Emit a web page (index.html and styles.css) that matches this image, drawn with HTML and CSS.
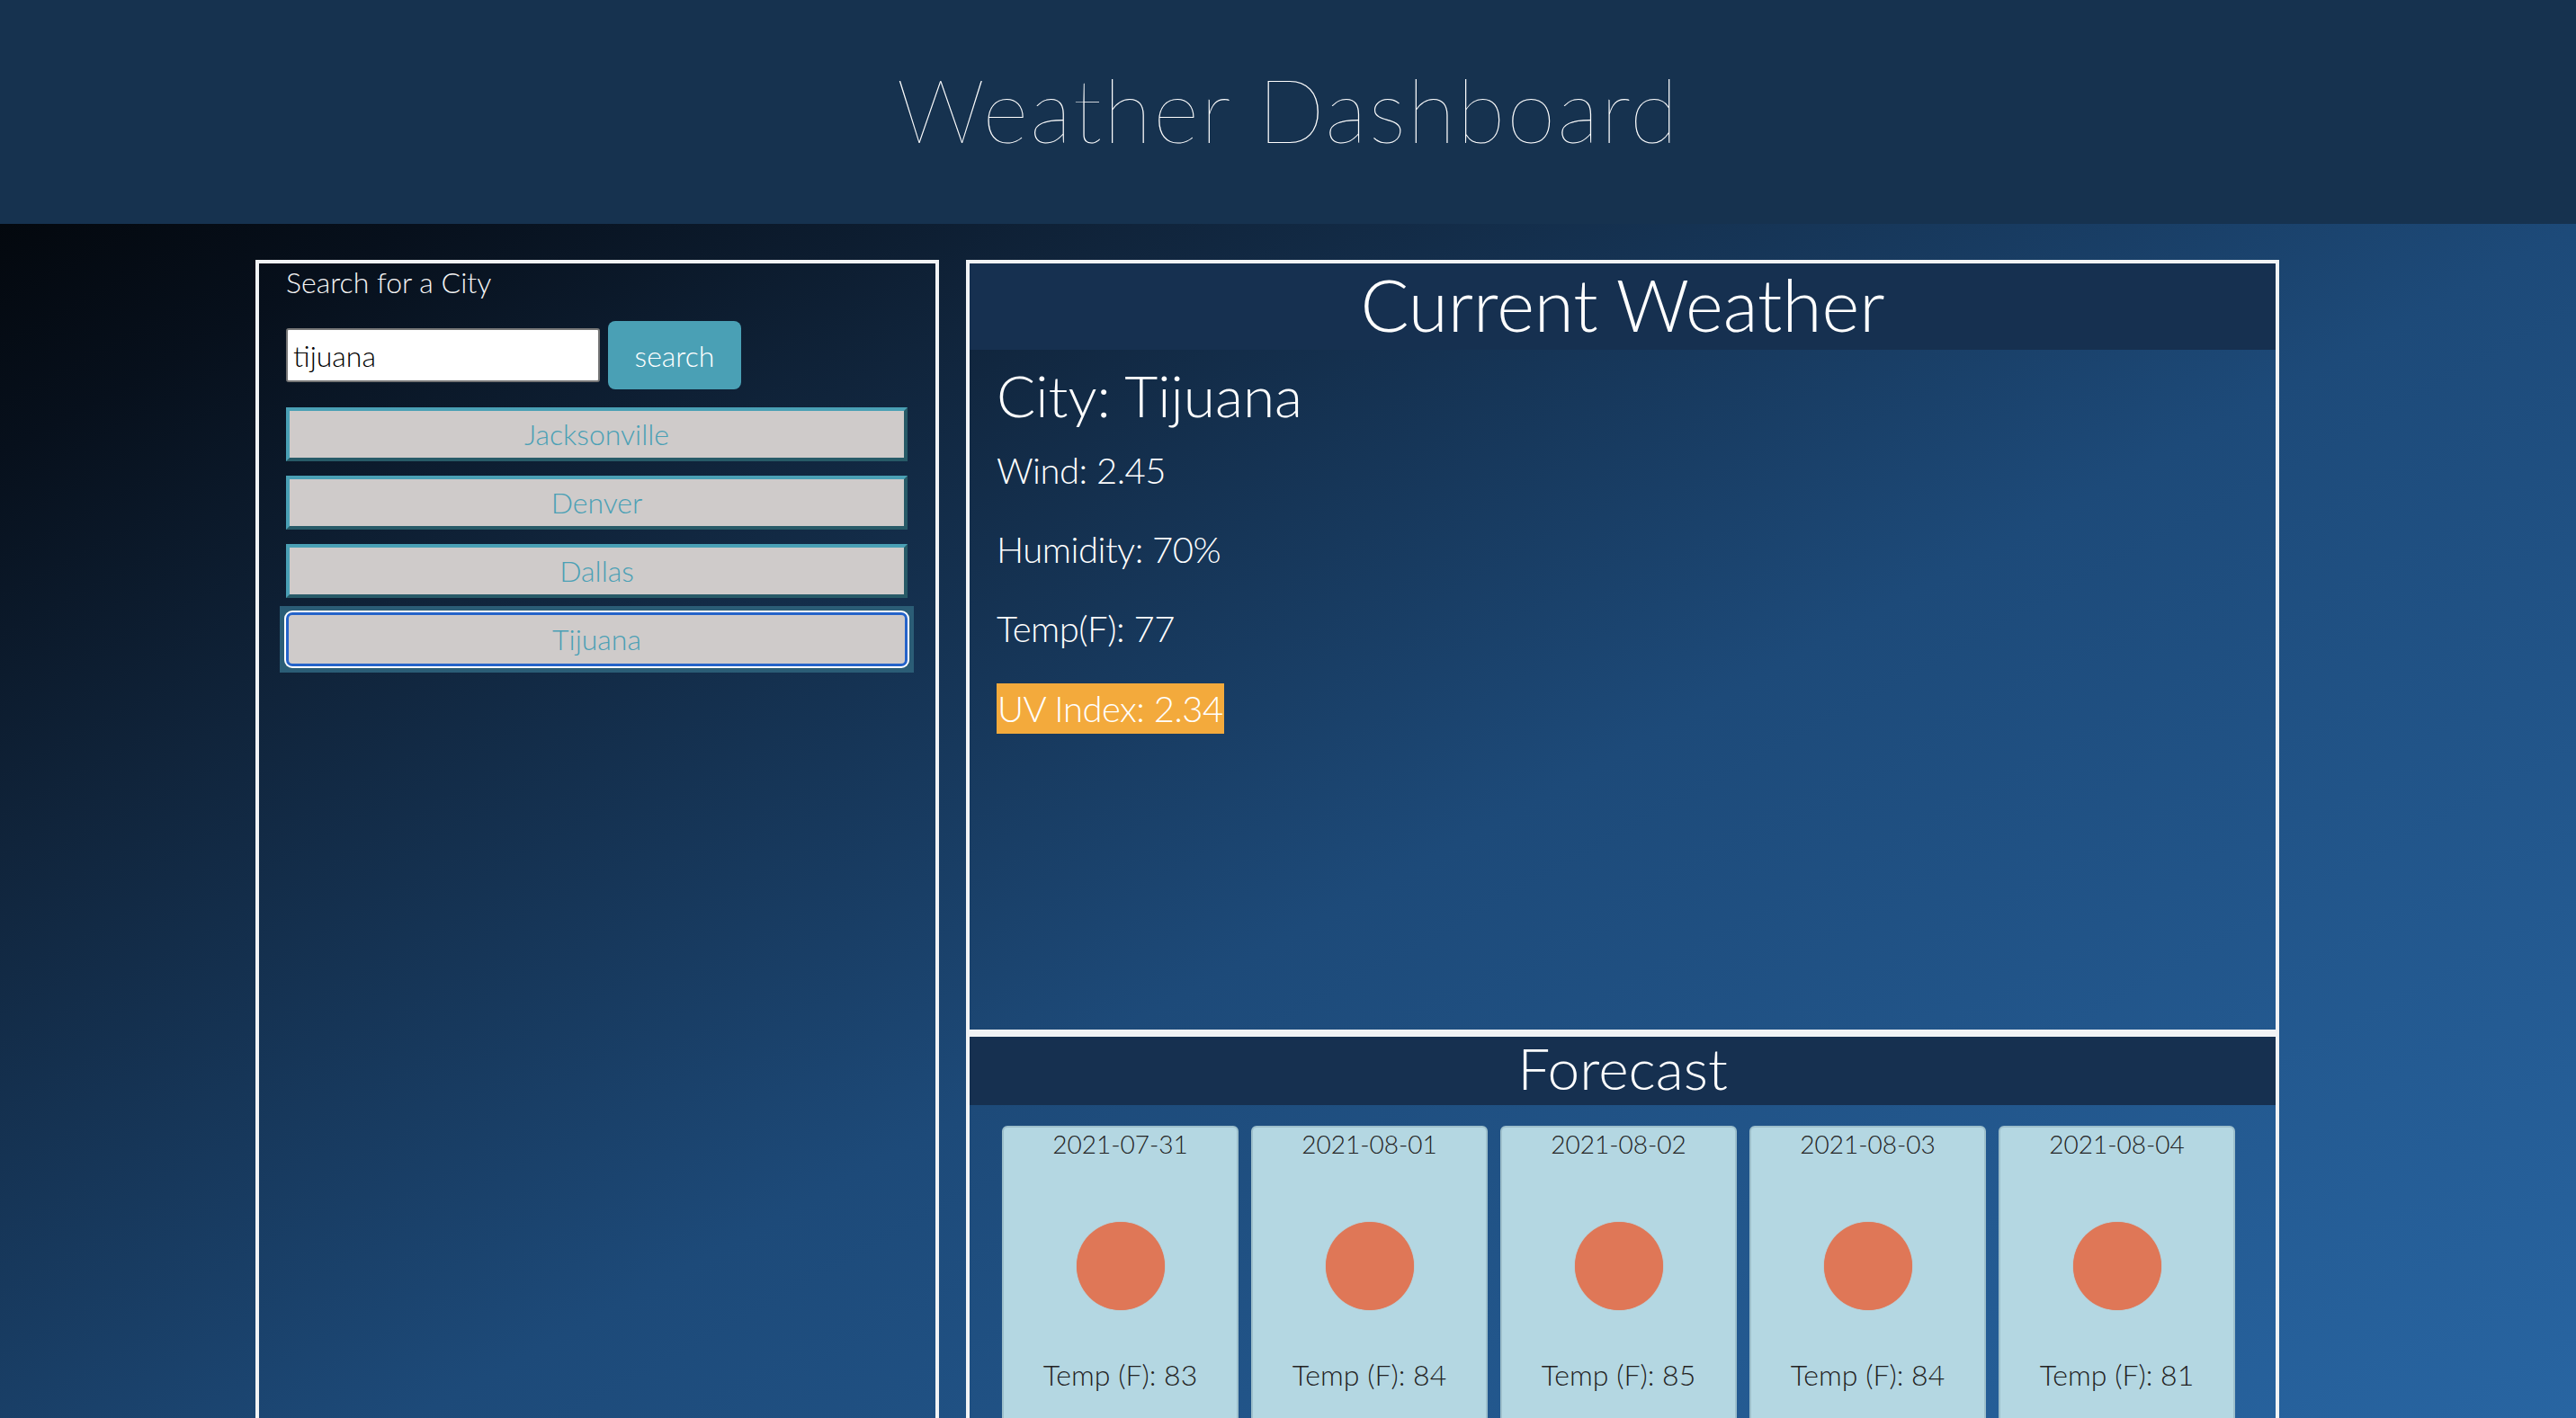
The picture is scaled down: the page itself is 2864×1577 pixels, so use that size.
FILE: index.html
```html
<!DOCTYPE html>
<html lang="en">
<head>
<meta charset="utf-8">
<title>Weather Dashboard</title>
<link rel="stylesheet" href="styles.css">
</head>
<body>
<header class="site-header">
  <h1 class="site-title">Weather Dashboard</h1>
</header>
<main class="layout">
  <aside class="search-panel">
    <label class="search-label" for="city-input">Search for a City</label>
    <div class="search-row">
      <input id="city-input" class="search-input" type="text" value="tijuana">
      <button class="search-btn" type="button">search</button>
    </div>
    <ul class="history">
      <li><button class="city-btn" type="button">Jacksonville</button></li>
      <li><button class="city-btn" type="button">Denver</button></li>
      <li><button class="city-btn" type="button">Dallas</button></li>
      <li><button class="city-btn is-active" type="button">Tijuana</button></li>
    </ul>
  </aside>
  <section class="weather-col">
    <div class="current-panel">
      <h2 class="panel-title current-title">Current Weather</h2>
      <div class="current-body">
        <h3 class="city-name">City: Tijuana</h3>
        <p class="stat">Wind: 2.45</p>
        <p class="stat">Humidity: 70%</p>
        <p class="stat">Temp(F): 77</p>
        <p class="stat stat-uv"><span class="uv">UV Index: 2.34</span></p>
      </div>
    </div>
    <div class="forecast-panel">
      <h2 class="panel-title forecast-title">Forecast</h2>
      <div class="cards">
        <div class="card"><p class="card-date">2021-07-31</p><div class="sun"></div><p class="card-temp">Temp (F): 83</p></div>
        <div class="card"><p class="card-date">2021-08-01</p><div class="sun"></div><p class="card-temp">Temp (F): 84</p></div>
        <div class="card"><p class="card-date">2021-08-02</p><div class="sun"></div><p class="card-temp">Temp (F): 85</p></div>
        <div class="card"><p class="card-date">2021-08-03</p><div class="sun"></div><p class="card-temp">Temp (F): 84</p></div>
        <div class="card"><p class="card-date">2021-08-04</p><div class="sun"></div><p class="card-temp">Temp (F): 81</p></div>
      </div>
    </div>
  </section>
</main>
</body>
</html>
```

FILE: styles.css
```css
* { box-sizing: border-box; }

html, body { margin: 0; padding: 0; }

body {
  height: 100vh;
  overflow: hidden;
  font-family: "Lato", "Noto Sans", sans-serif;
  font-weight: 300;
  color: #ffffff;
  background: linear-gradient(to bottom right, #000000 0%, #07101c 16%, #10243b 30%, #1d4a79 58%, #2865a2 100%);
}

/* Header */
.site-header {
  height: 249px;
  background: #16324f;
  padding-top: 72px;
}

.site-title {
  margin: 0;
  text-align: center;
  font-size: 98px;
  line-height: 98px;
  font-weight: 100;
  letter-spacing: 2px;
  color: #ffffff;
}

/* Layout */
.layout {
  display: flex;
  align-items: flex-start;
  gap: 30px;
  padding: 40px 0 0 284px;
}

/* Search panel */
.search-panel {
  width: 760px;
  height: 1400px;
  border: 4px solid #f1f3f5;
  padding: 1px 30px 0 30px;
}

.search-label {
  display: block;
  font-size: 32px;
  line-height: 40px;
  color: #f4f4f4;
}

.search-row {
  display: flex;
  align-items: center;
  gap: 9px;
  margin-top: 23px;
}

.search-input {
  width: 349px;
  height: 60px;
  border: 2px solid #767676;
  border-radius: 3px;
  background: #ffffff;
  padding: 0 6px;
  font-family: inherit;
  font-weight: 300;
  font-size: 32px;
  color: #000000;
}

.search-btn {
  width: 148px;
  height: 76px;
  border: none;
  border-radius: 8px;
  background: #4aa0b5;
  color: #ffffff;
  font-family: inherit;
  font-weight: 300;
  font-size: 32px;
  padding: 0;
}

.history {
  list-style: none;
  margin: 20px 0 0;
  padding: 0;
  display: flex;
  flex-direction: column;
  gap: 16px;
}

.city-btn {
  display: block;
  width: 691px;
  height: 60px;
  border-style: solid;
  border-width: 4px;
  border-color: #4aa0b5 #275a67 #275a67 #4aa0b5;
  background: #cfcbca;
  color: #4aa0b5;
  font-family: inherit;
  font-weight: 300;
  font-size: 32px;
  line-height: 52px;
  padding: 0;
  text-align: center;
}

.city-btn.is-active {
  position: relative;
  border: 3px solid #2563c9;
  border-radius: 7px;
  box-shadow: 0 0 0 2px #ffffff;
}

.city-btn.is-active::before {
  content: "";
  position: absolute;
  top: -10px;
  left: -10px;
  right: -10px;
  bottom: -10px;
  background: #2b5d76;
  z-index: -1;
}

/* Weather column */
.weather-col {
  width: 1460px;
}

.current-panel {
  height: 860px;
  border: 4px solid #f1f3f5;
}

.panel-title {
  margin: 0;
  background: #163050;
  text-align: center;
  font-weight: 300;
  color: #ffffff;
}

.current-title {
  font-size: 80px;
  line-height: 90px;
  padding-bottom: 6px;
}

.current-body {
  padding: 13px 30px 0;
}

.city-name {
  margin: 0 0 21px;
  font-size: 64px;
  line-height: 76px;
  font-weight: 300;
}

.stat {
  margin: 0;
  font-size: 40px;
  line-height: 48px;
  letter-spacing: -0.5px;
}

.stat + .stat {
  margin-top: 40px;
}

.stat + .stat.stat-uv {
  margin-top: 37px;
}

.uv {
  display: inline-block;
  vertical-align: top;
  line-height: 56px;
  background: #f3aa3c;
  color: #ffffff;
  padding: 0 1px;
}

/* Forecast */
.forecast-panel {
  height: 700px;
  border: 4px solid #f1f3f5;
}

.forecast-title {
  font-size: 64px;
  line-height: 70px;
  padding-bottom: 6px;
}

.cards {
  display: flex;
  gap: 14px;
  padding: 23px 36px 0;
}

.card {
  width: 263px;
  height: 420px;
  flex: none;
  background: #b4d7e2;
  border: 2px solid #9dbfcb;
  border-radius: 6px;
  padding-top: 1px;
  text-align: center;
  color: #222222;
}

.card-date {
  margin: 0;
  font-size: 28px;
  line-height: 34px;
}

.sun {
  width: 98px;
  height: 98px;
  margin: 70px auto 0;
  border-radius: 50%;
  background: #df7757;
  box-shadow: 0 0 1px #df7757;
}

.card-temp {
  margin: 52px 0 0;
  font-size: 32px;
  line-height: 40px;
}
```
